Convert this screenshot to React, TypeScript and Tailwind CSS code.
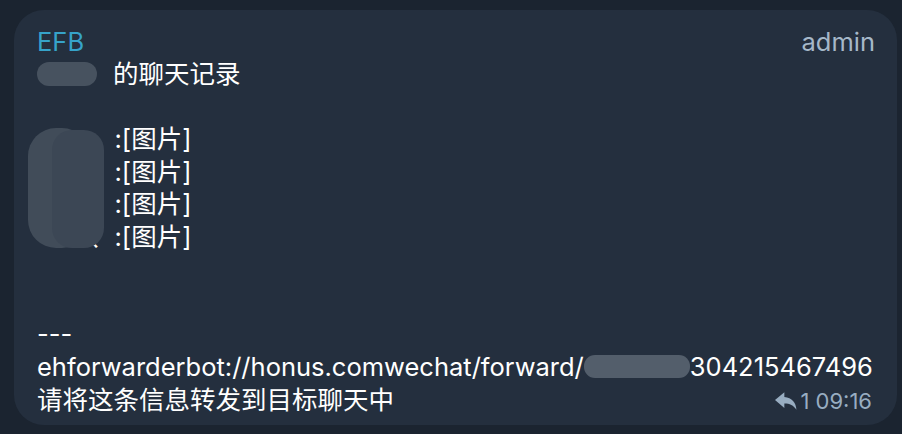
import React from "react";

const FONT = { fontFamily: '"Inter", "Noto Sans CJK SC", sans-serif' };

function ReplyIcon() {
  return (
    <svg width="22" height="18" viewBox="0 0 20 16" className="inline-block">
      <path
        d="M8.5 0 L0 7.2 L8.5 14.4 L8.5 10.2 C13.5 10.2 16.8 11.8 19.5 16 C19 9.5 15.5 5 8.5 4.4 Z"
        fill="currentColor"
      />
    </svg>
  );
}

const names = [0, 1, 2, 3];

export default function App() {
  return (
    <div className="w-[902px] h-[434px] bg-[#1b2430] pt-[10px] pl-[14px] pr-[5px]" style={FONT}>
      <div className="relative w-[883px] h-[415px] rounded-[30px] bg-[#242f3e] pl-[23px] pr-[22px] pt-[15px] text-[25.5px] text-white">
        <div className="flex justify-between items-center h-[33px] leading-[33px]">
          <span className="text-[#36a3c9]">EFB</span>
          <span className="text-[#a6b8c9]">admin</span>
        </div>

        <div className="leading-[32.5px]">
          <div className="flex items-center">
            <span className="inline-block w-[60px] h-[24px] rounded-[12px] bg-[#47525f] mr-[16px]" />
            <span>的聊天记录</span>
          </div>
          <div className="h-[32.5px]" />
          {names.map((i) => (
            <div key={i} className="flex items-center">
              <span className="inline-block w-[52px]" />
              <span>、:[图片]</span>
            </div>
          ))}
          <div className="h-[65px]" />
          <div className="h-[32.5px]">---</div>
          <div className="flex items-center whitespace-nowrap">
            <span>ehforwarderbot://honus.comwechat/forward/</span>
            <span className="inline-block w-[106px] h-[23px] rounded-[11px] bg-[#535e6b]" />
            <span>304215467496</span>
          </div>
          <div className="flex justify-between items-center">
            <span>请将这条信息转发到目标聊天中</span>
            <span className="flex items-center gap-[3px] text-[22px] text-[#98adc1] pr-[3px] pt-[2px]">
              <ReplyIcon />
              <span>1 09:16</span>
            </span>
          </div>
        </div>

        {/* blurred names overlay */}
        <div className="absolute left-[14px] top-[118px] w-[62px] h-[120px] rounded-[28px] bg-[#414c59]" />
        <div className="absolute left-[38px] top-[120px] w-[52px] h-[118px] rounded-[20px] bg-[#3c4755]" />
      </div>
    </div>
  );
}
